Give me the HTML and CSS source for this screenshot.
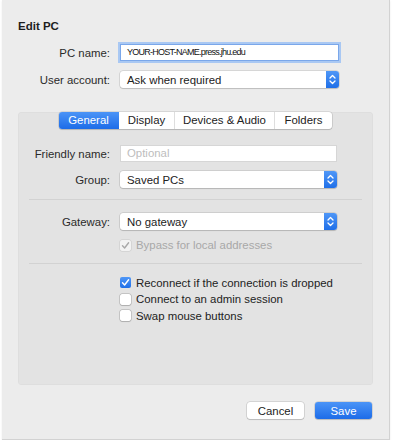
FILE: index.html
```html
<!DOCTYPE html>
<html lang="en">

<head>
  <meta charset="UTF-8" />
  <meta name="viewport" content="width=device-width, initial-scale=1.0" />
  <title>Edit PC</title>
  <link rel="stylesheet" href="styles.css">
</head>

<body>
  <div class="window">
    <div class="title">Edit PC</div>

    <div class="form top-form">
      <div class="label">PC name:</div>
      <div class="field focused host">YOUR-HOST-NAME.press.jhu.edu</div>

      <div class="label">User account:</div>
      <div class="popup">
        <span>Ask when required</span>
        <span class="stepper">
          <svg width="13" height="17" viewBox="0 0 13 17"><path d="M4 7 L6.5 4.5 L9 7 M4 10 L6.5 12.5 L9 10" fill="none" stroke="#fff" stroke-width="1.3" stroke-linecap="round" stroke-linejoin="round"/></svg>
        </span>
      </div>
    </div>

    <div class="group">
      <div class="tabs">
        <div class="tab active">General</div>
        <div class="tab">Display</div>
        <div class="tab">Devices &amp; Audio</div>
        <div class="tab last">Folders</div>
      </div>

      <div class="form inner-form">
        <div class="label">Friendly name:</div>
        <div class="field placeholder">Optional</div>

        <div class="label">Group:</div>
        <div class="popup">
          <span>Saved PCs</span>
          <span class="stepper">
            <svg width="13" height="17" viewBox="0 0 13 17"><path d="M4 7 L6.5 4.5 L9 7 M4 10 L6.5 12.5 L9 10" fill="none" stroke="#fff" stroke-width="1.3" stroke-linecap="round" stroke-linejoin="round"/></svg>
          </span>
        </div>
      </div>

      <div class="sep"></div>

      <div class="form gateway-form">
        <div class="label">Gateway:</div>
        <div class="popup">
          <span>No gateway</span>
          <span class="stepper">
            <svg width="13" height="17" viewBox="0 0 13 17"><path d="M4 7 L6.5 4.5 L9 7 M4 10 L6.5 12.5 L9 10" fill="none" stroke="#fff" stroke-width="1.3" stroke-linecap="round" stroke-linejoin="round"/></svg>
          </span>
        </div>
      </div>

      <div class="checks bypass">
        <div class="check disabled">
          <span class="box">
            <svg width="11" height="11" viewBox="0 0 11 11"><path d="M2.5 5.8 L4.6 8 L8.6 2.8" fill="none" stroke="#a8a8a8" stroke-width="1.4" stroke-linecap="round" stroke-linejoin="round"/></svg>
          </span>
          Bypass for local addresses
        </div>
      </div>

      <div class="sep sep-two"></div>

      <div class="checks options">
        <div class="check">
          <span class="box checked">
            <svg width="11" height="11" viewBox="0 0 11 11"><path d="M2.5 5.8 L4.6 8 L8.6 2.8" fill="none" stroke="#fff" stroke-width="1.4" stroke-linecap="round" stroke-linejoin="round"/></svg>
          </span>
          Reconnect if the connection is dropped
        </div>
        <div class="check">
          <span class="box"></span>
          Connect to an admin session
        </div>
        <div class="check">
          <span class="box"></span>
          Swap mouse buttons
        </div>
      </div>
    </div>

    <div class="actions">
      <button class="btn">Cancel</button>
      <button class="btn primary">Save</button>
    </div>
  </div>
</body>

</html>
```

FILE: styles.css
```css
body {
  margin: 0;
  padding: 0;
  background-color: #fff;
  font-family: 'Liberation Sans', Arial, sans-serif;
  font-size: 11.4px;
  color: #262626;
}

.window {
  box-sizing: border-box;
  width: 388px;
  height: 440px;
  margin-left: 2px;
  padding: 0 16px;
  background-color: #ececec;
  border-right: 1px solid #d2d2d2;
  border-bottom: 1px solid #d2d2d2;
  box-shadow: 0 1px 2px rgba(0, 0, 0, 0.08);
}

.title {
  padding-top: 18px;
  height: 16px;
  line-height: 16px;
  font-weight: bold;
  font-size: 11.5px;
  color: #1e1e1e;
}

.form {
  display: grid;
  grid-template-columns: 92px 219px;
  column-gap: 10px;
  align-items: center;
}

.top-form {
  margin-top: 10px;
  row-gap: 10px;
}

.label {
  text-align: right;
  color: #2a2a2a;
}

.field {
  box-sizing: border-box;
  height: 17px;
  line-height: 15px;
  padding: 0 6px;
  background-color: #fff;
  border: 1px solid #d6d6d6;
  white-space: nowrap;
}

.field.focused {
  border-color: #7aa7ea;
  box-shadow: 0 0 0 2px #a9c8f3;
}

.host {
  font-size: 9px;
  letter-spacing: -0.75px;
  color: #111;
}

.placeholder {
  color: #bdbdbd;
}

.popup {
  box-sizing: border-box;
  height: 17px;
  display: flex;
  align-items: center;
  justify-content: space-between;
  padding-left: 7px;
  background-color: #fff;
  border-radius: 3px;
  box-shadow: 0 0 0 0.5px rgba(0, 0, 0, 0.18), 0 1px 1px rgba(0, 0, 0, 0.12);
  color: #222;
}

.stepper {
  display: flex;
  width: 13px;
  height: 17px;
  border-radius: 0 3px 3px 0;
  background: linear-gradient(#4f97f7, #1f6fe8);
}

.group {
  box-sizing: border-box;
  height: 273px;
  margin-top: 32px;
  background-color: #e3e3e3;
  border-radius: 4px;
  box-shadow: inset 0 0 0 0.5px rgba(0, 0, 0, 0.04);
}

.tabs {
  display: flex;
  width: fit-content;
  height: 17px;
  margin: -8px auto 0;
  background-color: #fff;
  border-radius: 3px;
  box-shadow: 0 0 0 0.5px rgba(0, 0, 0, 0.18), 0 1px 1px rgba(0, 0, 0, 0.12);
}

.tab {
  line-height: 17px;
  text-align: center;
  color: #222;
  border-right: 1px solid #dedede;
}

.tab:nth-child(1) { width: 59px; }
.tab:nth-child(2) { width: 55px; }
.tab:nth-child(3) { width: 99px; }
.tab:nth-child(4) { width: 57px; }

.tab.last {
  border-right: none;
}

.tab.active {
  color: #fff;
  border-radius: 3px 0 0 3px;
  border-right-color: transparent;
  background: linear-gradient(#4b94f7, #1d6ce8);
}

.inner-form {
  margin-top: 16px;
  row-gap: 9px;
  grid-template-columns: 92px 217px;
}

.sep {
  height: 1px;
  margin: 11px 11px 0;
  background-color: #d2d2d2;
}

.gateway-form {
  margin-top: 13px;
  grid-template-columns: 92px 217px;
}

.checks {
  padding-left: 102px;
}

.bypass {
  margin-top: 7px;
}

.sep-two {
  margin-top: 9px;
}

.options {
  margin-top: 11px;
}

.check {
  display: flex;
  align-items: center;
  gap: 5px;
  height: 16.5px;
  color: #222;
}

.check.disabled {
  color: #a8a8a8;
}

.box {
  box-sizing: border-box;
  display: flex;
  width: 11px;
  height: 11px;
  background-color: #fff;
  border-radius: 2px;
  box-shadow: 0 0 0 0.5px rgba(0, 0, 0, 0.25), 0 0.5px 1px rgba(0, 0, 0, 0.12);
}

.check.disabled .box {
  background-color: #f2f2f2;
  box-shadow: 0 0 0 0.5px rgba(0, 0, 0, 0.12);
}

.box.checked {
  background: linear-gradient(#4f97f7, #1f6fe8);
  box-shadow: none;
}

.actions {
  display: flex;
  justify-content: flex-end;
  gap: 11px;
  margin-top: 17px;
  padding-right: 1px;
}

.btn {
  width: 57px;
  height: 17px;
  padding: 0;
  border: none;
  border-radius: 3px;
  font-family: inherit;
  font-size: 11.4px;
  color: #222;
  background-color: #fff;
  box-shadow: 0 0 0 0.5px rgba(0, 0, 0, 0.2), 0 1px 1px rgba(0, 0, 0, 0.12);
}

.btn.primary {
  color: #fff;
  background: linear-gradient(#4b94f7, #1d6ce8);
}
```
